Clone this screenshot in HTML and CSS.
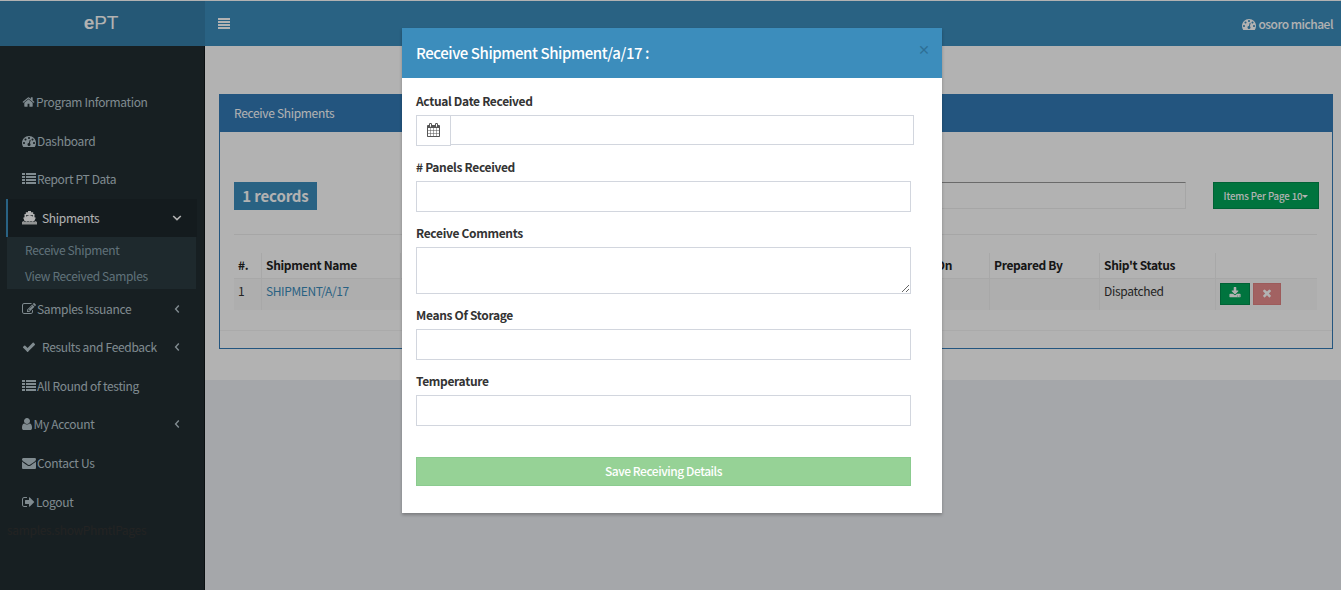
FILE: index.html
```
<!DOCTYPE html>
<html lang="en">
<head>
<meta charset="utf-8">
<title>ePT</title>
<link rel="stylesheet" href="styles.css">
</head>
<body>
<svg class="defs" width="0" height="0">
<symbol id="home" viewBox="0 0 1792 1792"><path d="M1472 992v480q0 26-19 45t-45 19h-384v-384h-256v384h-384q-26 0-45-19t-19-45v-480q0-1 .5-3t.5-3l575-474 575 474q1 2 1 6zm223-69l-62 74q-8 9-21 11h-3q-13 0-21-7l-692-577-692 577q-12 8-24 7-13-2-21-11l-62-74q-8-10-7-23.5t11-21.5l719-599q32-26 76-26t76 26l244 204v-195q0-14 9-23t23-9h192q14 0 23 9t9 23v408l219 182q10 8 11 21.5t-7 23.5z"/></symbol>
<symbol id="dash" viewBox="0 0 1792 1792"><path d="M384 1152q0-53-37.5-90.5t-90.5-37.5-90.5 37.5-37.5 90.5 37.5 90.5 90.5 37.5 90.5-37.5 37.5-90.5zm192-448q0-53-37.5-90.5t-90.5-37.5-90.5 37.5-37.5 90.5 37.5 90.5 90.5 37.5 90.5-37.5 37.5-90.5zm428 481l101-382q6-26-7.5-48.5t-38.5-29.5-48 6.5-30 39.5l-101 382q-60 5-107 43.5t-63 98.5q-20 77 20 146t117 89 146-20 89-117q16-60-6-117t-72-91zm660-33q0-53-37.5-90.5t-90.5-37.5-90.5 37.5-37.5 90.5 37.5 90.5 90.5 37.5 90.5-37.5 37.5-90.5zm-640-640q0-53-37.5-90.5t-90.5-37.5-90.5 37.5-37.5 90.5 37.5 90.5 90.5 37.5 90.5-37.5 37.5-90.5zm448 192q0-53-37.5-90.5t-90.5-37.5-90.5 37.5-37.5 90.5 37.5 90.5 90.5 37.5 90.5-37.5 37.5-90.5zm320 448q0 261-141 483-19 29-54 29h-1402q-35 0-54-29-141-221-141-483 0-182 71-348t191-286 286-191 348-71 348 71 286 191 191 286 71 348z"/></symbol>
<symbol id="list" viewBox="0 0 14 14"><path d="M0 1h3v2H0zM4 1h10v2H4zM0 4h3v2H0zM4 4h10v2H4zM0 7h3v2H0zM4 7h10v2H4zM0 10h3v2H0zM4 10h10v2H4z"/></symbol>
<symbol id="ship" viewBox="0 0 15 14"><path d="M6 0h3v1.2h2.2V3h1.3v3.2l1.3.6-1.6 3.4H2.6L1.2 6.8l1.3-.6V3h1.3V1.2H6zM4 4.2v1.4l3.5-1.3L11 5.6V4.2z"/><path d="M0 11l1.5-1 1.5 1 1.5-1 1.5 1 1.5-1 1.5 1 1.5-1 1.5 1 1.5-1 1.5 1v2.6H0z" opacity=".8"/></symbol>
<symbol id="edit" viewBox="0 0 1792 1792"><path d="M888 1184l116-116-152-152-116 116v56h96v96h56zm440-720q-16-16-33 1l-350 350q-17 17-1 33t33-1l350-350q17-17 1-33zm80 594v190q0 119-84.5 203.5t-203.5 84.5h-832q-119 0-203.5-84.5t-84.5-203.5v-832q0-119 84.5-203.5t203.5-84.5h832q63 0 117 25 15 7 18 23 3 17-9 29l-49 49q-14 14-32 8-23-6-45-6h-832q-66 0-113 47t-47 113v832q0 66 47 113t113 47h832q66 0 113-47t47-113v-126q0-13 9-22l64-64q15-15 35-7t20 29zm-96-738l288 288-672 672h-288v-288zm444 132l-92 92-288-288 92-92q28-28 68-28t68 28l152 152q28 28 28 68t-28 68z"/></symbol>
<symbol id="check" viewBox="0 0 1792 1792"><path d="M1671 566q0 40-28 68l-724 724-136 136q-28 28-68 28t-68-28l-136-136-362-362q-28-28-28-68t28-68l136-136q28-28 68-28t68 28l294 295 656-657q28-28 68-28t68 28l136 136q28 28 28 68z"/></symbol>
<symbol id="user" viewBox="256 0 1280 1792"><path d="M1536 1399q0 109-62.5 187t-150.5 78h-854q-88 0-150.5-78t-62.5-187q0-85 8.5-160.5t31.5-152 58.5-131 94-89 134.5-34.5q131 128 313 128t313-128q76 0 134.5 34.5t94 89 58.5 131 31.5 152 8.5 160.5zm-256-887q0 159-112.5 271.5t-271.5 112.5-271.5-112.5-112.5-271.5 112.5-271.5 271.5-112.5 271.5 112.5 112.5 271.5z"/></symbol>
<symbol id="mail" viewBox="0 0 1792 1792"><path d="M1792 710v794q0 66-47 113t-113 47h-1472q-66 0-113-47t-47-113v-794q44 49 101 87 362 246 497 345 57 42 92.5 65.5t94.5 48 110 24.5h2q51 0 110-24.5t94.5-48 92.5-65.5q170-123 498-345 57-39 100-87zm0-294q0 79-49 151t-122 123q-376 261-468 325-10 7-42.5 31t-54 38.5-52 32.5-57.5 27-50 9h-2q-23 0-50-9t-57.5-27-52-32.5-54-38.5-42.5-31q-91-64-262-182.5t-205-142.5q-62-42-117-115.5t-55-136.5q0-78 41.5-130t118.5-52h1472q65 0 112.5 47t47.5 113z"/></symbol>
<symbol id="out" viewBox="64 0 1664 1792"><path d="M704 1440q0 4 1 20t.5 26.5-3 23.5-10 19.5-20.5 6.5h-320q-119 0-203.5-84.5t-84.5-203.5v-704q0-119 84.5-203.5t203.5-84.5h320q13 0 22.5 9.5t9.5 22.5q0 4 1 20t.5 26.5-3 23.5-10 19.5-20.5 6.5h-320q-66 0-113 47t-47 113v704q0 66 47 113t113 47h312l11.5 1 11.5 3 8 5.5 7 9 2 13.5zm928-544q0 26-19 45l-544 544q-19 19-45 19t-45-19-19-45v-288h-448q-26 0-45-19t-19-45v-384q0-26 19-45t45-19h448v-288q0-26 19-45t45-19 45 19l544 544q19 19 19 45z"/></symbol>
<symbol id="download" viewBox="0 0 1792 1792"><path d="M1344 1344q0-26-19-45t-45-19-45 19-19 45 19 45 45 19 45-19 19-45zm256 0q0-26-19-45t-45-19-45 19-19 45 19 45 45 19 45-19 19-45zm128-224v320q0 40-28 68t-68 28h-1472q-40 0-68-28t-28-68v-320q0-40 28-68t68-28h465l135 136q58 56 136 56t136-56l136-136h464q40 0 68 28t28 68zm-325-569q17 41-14 70l-448 448q-18 19-45 19t-45-19l-448-448q-31-29-14-70 17-39 59-39h256v-448q0-26 19-45t45-19h256q26 0 45 19t19 45v448h256q42 0 59 39z"/></symbol>
<symbol id="times" viewBox="0 0 1792 1792"><path d="M1490 1322q0 40-28 68l-136 136q-28 28-68 28t-68-28l-294-294-294 294q-28 28-68 28t-68-28l-136-136q-28-28-28-68t28-68l294-294-294-294q-28-28-28-68t28-68l136-136q28-28 68-28t68 28l294 294 294-294q28-28 68-28t68 28l136 136q28 28 28 68t-28 68l-294 294 294 294q28 28 28 68z"/></symbol>
<symbol id="cal" viewBox="64 0 1664 1792"><path d="M192 1664h288v-288h-288v288zm352 0h320v-288h-320v288zm-352-352h288v-320h-288v320zm352 0h320v-320h-320v320zm-352-384h288v-288h-288v288zm736 736h320v-288h-320v288zm-384-736h320v-288h-320v288zm768 736h288v-288h-288v288zm-384-352h320v-320h-320v320zm-352-864v-288q0-13-9.5-22.5t-22.5-9.5h-64q-13 0-22.5 9.5t-9.5 22.5v288q0 13 9.5 22.5t22.5 9.5h64q13 0 22.5-9.5t9.5-22.5zm736 864h288v-320h-288v320zm-384-384h320v-288h-320v288zm384 0h288v-288h-288v288zm32-480v-288q0-13-9.5-22.5t-22.5-9.5h-64q-13 0-22.5 9.5t-9.5 22.5v288q0 13 9.5 22.5t22.5 9.5h64q13 0 22.5-9.5t9.5-22.5zm384-64v1280q0 52-38 90t-90 38h-1408q-52 0-90-38t-38-90v-1280q0-52 38-90t90-38h128v-96q0-66 47-113t113-47h64q66 0 113 47t47 113v96h384v-96q0-66 47-113t113-47h64q66 0 113 47t47 113v96h128q52 0 90 38t38 90z"/></symbol>
<symbol id="left" viewBox="0 0 6 10"><path d="M4.8 1.6L1.6 5l3.2 3.4" fill="none" stroke="currentColor" stroke-width="1.4"/></symbol>
<symbol id="down" viewBox="0 0 10 6"><path d="M1.2 1L5 4.6 8.8 1" fill="none" stroke="currentColor" stroke-width="1.6"/></symbol>
</svg>

<div class="page">
  <header class="topbar">
    <div class="brand"><span><b>e</b>PT</span></div>
    <nav class="navbar">
      <span class="burger"><i></i><i></i><i></i><i></i></span>
      <span class="account"><svg class="ico"><use href="#dash"/></svg><span>osoro michael</span></span>
    </nav>
  </header>
  <div class="columns">
    <aside class="sidebar">
      <ul class="menu">
        <li class="item"><svg class="ico narrow"><use href="#home"/></svg><span>Program Information</span></li>
        <li class="item"><svg class="ico"><use href="#dash"/></svg><span>Dashboard</span></li>
        <li class="item"><svg class="ico"><use href="#list"/></svg><span>Report PT Data</span></li>
        <li class="item active"><svg class="ico wide"><use href="#ship"/></svg><span>Shipments</span><svg class="chev down"><use href="#down"/></svg></li>
        <li class="sub"><span>Receive Shipment</span><span>View Received Samples</span></li>
        <li class="item"><svg class="ico"><use href="#edit"/></svg><span>Samples Issuance</span><svg class="chev"><use href="#left"/></svg></li>
        <li class="item"><svg class="ico spaced"><use href="#check"/></svg><span>Results and Feedback</span><svg class="chev"><use href="#left"/></svg></li>
        <li class="item"><svg class="ico"><use href="#list"/></svg><span>All Round of testing</span></li>
        <li class="item"><svg class="ico thin"><use href="#user"/></svg><span>My Account</span><svg class="chev"><use href="#left"/></svg></li>
        <li class="item"><svg class="ico"><use href="#mail"/></svg><span>Contact Us</span></li>
        <li class="item"><svg class="ico narrow"><use href="#out"/></svg><span>Logout</span></li>
      </ul>
      <div class="template">samples.showPhmtlPages</div>
    </aside>
    <main class="content">
      <div class="sheet">
        <section class="panel">
          <h2 class="panel-head">Receive Shipments</h2>
          <div class="panel-body">
            <div class="tools">
              <span class="records">1 records</span>
              <input class="search" type="text">
              <span class="per-page">Items Per Page 10<i class="caret"></i></span>
            </div>
            <div class="grid">
              <div class="row head"><span>#.</span><span>Shipment Name</span><span></span><span class="end">Prepared On</span><span>Prepared By</span><span>Ship't Status</span><span></span></div>
              <div class="row data"><span>1</span><span class="link">SHIPMENT/A/17</span><span></span><span></span><span></span><span>Dispatched</span><span class="actions"><b class="act"><svg><use href="#download"/></svg></b><b class="act red"><svg><use href="#times"/></svg></b></span></div>
            </div>
          </div>
          <div class="panel-foot"></div>
        </section>
      </div>
    </main>
  </div>
</div>

<div class="backdrop">
  <div class="modal">
    <div class="modal-head"><h1>Receive Shipment Shipment/a/17 :</h1><span class="close">×</span></div>
    <form class="modal-body">
      <label>Actual Date Received</label>
      <div class="group"><span class="addon"><svg><use href="#cal"/></svg></span><input type="text"></div>
      <label># Panels Received</label>
      <input class="field" type="text">
      <label>Receive Comments</label>
      <textarea class="field area"></textarea>
      <label>Means Of Storage</label>
      <input class="field" type="text">
      <label>Temperature</label>
      <input class="field" type="text">
      <button class="save" type="button">Save Receiving Details</button>
    </form>
  </div>
</div>
</body>
</html>
```
FILE: styles.css
```
* { box-sizing: border-box; }
body { margin: 0; height: 590px; overflow: hidden; font: 12px/20px "Noto Sans CJK JP", "Open Sans", sans-serif; letter-spacing: -.32px; color: #333; }
svg { fill: currentColor; flex: none; }
.defs { position: absolute; }
.page { height: 590px; display: flex; flex-direction: column; border-top: 1px solid #fff; }
.topbar { display: flex; height: 45px; color: #fff; }
.brand { width: 205px; background: #367fa9; text-align: center; padding-right: 3px; font: 19px/43px "Liberation Sans", Arial, sans-serif; letter-spacing: -.2px; }
.navbar { flex: 1; background: #3c8dbc; display: flex; justify-content: space-between; align-items: center; padding: 0 8px 0 13px; }
.burger { display: flex; flex-direction: column; gap: 1px; width: 12px; }
.burger i { height: 2px; background: #fff; }
.account { display: flex; align-items: center; gap: 2px; font-weight: 500; letter-spacing: -.5px; }
.columns { flex: 1; display: flex; }
.sidebar { width: 205px; background: #222d32; border-right: 1px solid #11181b; padding: 37px 7px 0 6px; color: #b8c7ce; }
.menu { list-style: none; margin: 0; padding: 0; }
.item { height: 38.6px; padding: 0 17px 0 12.5px; border-left: 3px solid transparent; display: flex; align-items: center; gap: 1.5px; }
.active { background: #1e282c; border-left-color: #3c8dbc; border-left-width: 2px; padding-left: 14px; color: #fff; }
.ico { width: 14px; height: 14px; }
.ico.narrow { width: 13px; }
.ico.thin { width: 10px; margin-right: .5px; }
.ico.wide { width: 15px; margin-right: 3.5px; }
.ico.spaced { margin-right: 5px; }
.chev { width: 6px; height: 10px; margin-left: auto; }
.chev.down { width: 10px; height: 6px; margin-right: -2px; }
.sub { background: #2c3b41; margin: 0 1px; padding-left: 18px; height: 52px; display: flex; flex-direction: column; color: #8aa4af; line-height: 26px; letter-spacing: -.36px; }
.template { color: #333; height: 20px; margin: -1px 0 0 1px; }
.content { flex: 1; background: #edeff4; }
.sheet { height: 334px; background: #fff; padding: 48px 8px 0 14px; }
.panel { height: 255px; border: 1px solid #337ab7; display: flex; flex-direction: column; }
.panel-head { margin: 0; height: 37px; padding: 0 14px; background: #337ab7; color: #fff; font-size: 12px; font-weight: 400; line-height: 36px; }
.panel-body { flex: 1; padding: 50px 15px 0 14px; border-bottom: 1px solid #f4f4f4; }
.panel-foot { height: 17px; }
.tools { display: flex; height: 53px; align-items: flex-start; border-bottom: 1px solid #eee; }
.records { width: 83px; height: 28px; background: #3c8dbc; color: #fff; font-size: 15px; font-weight: 700; line-height: 27px; text-align: center; letter-spacing: -.15px; }
.search { margin-left: 400px; width: 469px; height: 27px; border: 1px solid #eee; border-top-color: #999; background: #fff; }
.per-page { margin-left: auto; margin-right: -2px; width: 106px; height: 27px; display: flex; align-items: center; justify-content: center; background: #00a65a; border: 1px solid #008d4c; color: #fff; font-size: 9.6px; font-weight: 500; letter-spacing: -.1px; }
.caret { border: 3px solid transparent; border-top-color: #fff; border-bottom: 0; margin-top: 1px; }
.grid { padding-top: 18px; }
.row { display: grid; grid-template-columns: 27px 139px 390px 199px 110px 116px 102px; }
.row > span { border-left: 1px solid #f1f1f1; padding-left: 4px; }
.row > span:first-child { border-left-color: transparent; padding-left: 3px; }
.head { height: 26px; line-height: 24px; font-weight: 700; color: #222; border-bottom: 1px solid #f1f1f1; }
.head .end { text-align: right; padding-right: 37px; }
.data { height: 31px; line-height: 24px; background: #f9f9f9; }
.data .link { color: #3c8dbc; letter-spacing: -.4px; }
.actions { display: flex; gap: 3px; padding-top: 4px; }
.act { width: 30px; height: 22px; background: #00a65a; border: 1px solid #008d4c; display: flex; align-items: center; justify-content: center; color: #fff; }
.act.red { width: 28px; background: #e98d8d; border-color: #e18383; }
.act svg { width: 12px; height: 12px; margin-top: -2px; }
.backdrop { position: absolute; inset: 0; background: rgba(0,0,0,.3); padding: 28px 399px 0 402px; }
.modal { height: 485px; background: #fff; box-shadow: 0 2px 3px rgba(0,0,0,.25); }
.modal-head { height: 50px; background: #3c8dbc; color: #fff; display: flex; justify-content: space-between; padding: 0 14px; }
.modal-head h1 { margin: 0; font-size: 15px; font-weight: 500; line-height: 50px; letter-spacing: -.43px; }
.close { color: #2e6f95; font-size: 12.5px; font-weight: 700; line-height: 43px; margin-right: -2px; }
.modal-body { padding: 13px 31px 0 14px; }
label { display: block; height: 24px; font-weight: 700; letter-spacing: -.33px; }
.group { display: flex; align-items: flex-start; width: 498px; height: 31px; margin-bottom: 11px; }
.group input { flex: 1; height: 30px; border: 1px solid #d2d6de; border-left: 0; }
.addon { width: 35px; height: 31px; border: 1px solid #d2d6de; display: flex; align-items: center; justify-content: center; color: #555; }
.addon svg { width: 13px; height: 14px; margin-top: -2px; }
.field { display: block; width: 495px; height: 31px; border: 1px solid #d2d6de; margin: 0 0 11px; }
.area { height: 47px; }
.save { display: block; width: 495px; height: 29px; margin-top: 31px; padding: 0 0 1px; border: 1px solid #8bcb8f; background: #96d296; color: #fff; font: 500 12px/26px "Noto Sans CJK JP", "Open Sans", sans-serif; letter-spacing: -.46px; }
```
